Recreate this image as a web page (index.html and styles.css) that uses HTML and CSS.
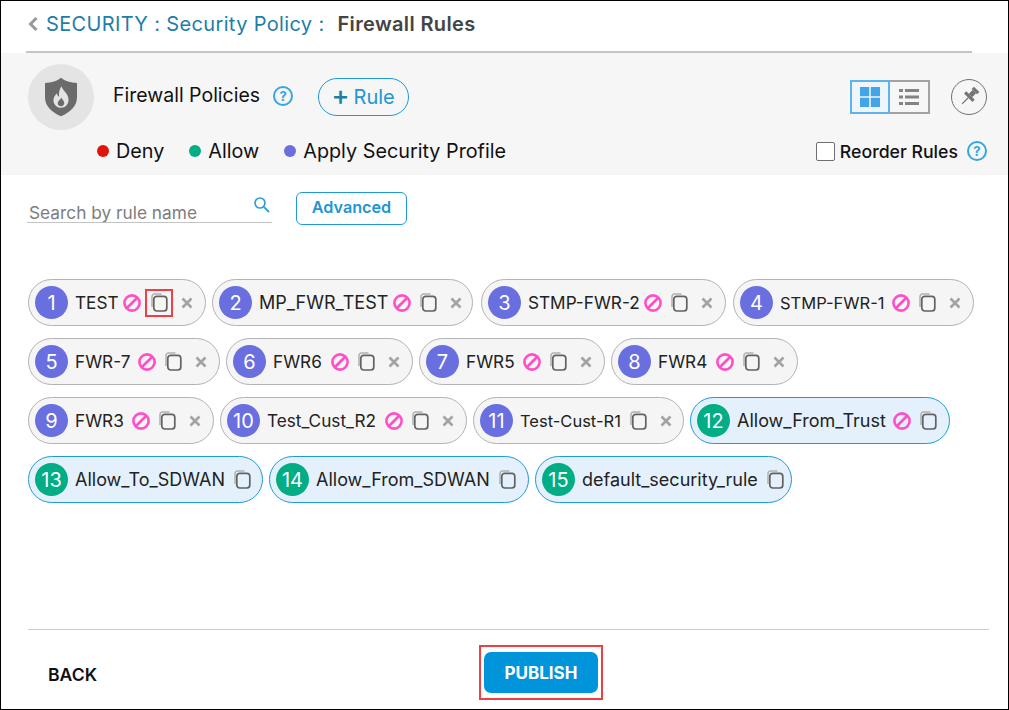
FILE: index.html
```html
<!DOCTYPE html>
<html lang="en">

<head>
    <meta charset="UTF-8">
    <title>Firewall Rules</title>
    <link rel="stylesheet" href="styles.css">
</head>

<body>
    <svg class="defs" width="0" height="0">
        <symbol id="ban" viewBox="0 0 18 18">
            <circle cx="9" cy="9" r="7.6" fill="none" stroke="#ff4fc8" stroke-width="2.6" />
            <path d="M4 14 14 4" stroke="#ff4fc8" stroke-width="2.6" />
        </symbol>
        <symbol id="copy" viewBox="0 0 17 19">
            <path d="M1 14V3.500A2.500 2.500 0 0 1 3.500 1H10.500" fill="none" stroke="#b0b0b0" stroke-width="1.500" />
            <rect x="2.800" y="3.300" width="13" height="14.700" rx="3" fill="none" stroke="#626262" stroke-width="1.700" />
        </symbol>
        <symbol id="close" viewBox="0 0 12 12">
            <path d="M1.500 1.500 10.500 10.500M10.500 1.500 1.500 10.500" stroke="#a3a3a3" stroke-width="2.600" />
        </symbol>
    </svg>

    <div class="page">
        <div class="crumbs">
            <svg class="back-arrow" width="10" height="14" viewBox="0 0 10 14">
                <path d="M8.500 1 2.500 7 8.500 13" fill="none" stroke="#999" stroke-width="3" />
            </svg>
            <span class="crumb-link">SECURITY : Security Policy :</span>
            <span class="crumb-current">Firewall Rules</span>
        </div>

        <div class="panel">
            <div class="panel-top">
                <div class="shield-badge">
                    <svg width="32" height="40" viewBox="0 0 34 41">
                        <path d="M17 0C21 3.500 27 5.500 34 5.500V21c0 9-7 15.500-17 20C7 36.500 0 30 0 21V5.500C7 5.500 13 3.500 17 0Z" fill="#6b6b6b" />
                        <path d="M17.500 9c1 4.500 7.500 7.500 7.500 14.500 0 5-3.500 8.500-8 8.500s-8-3.500-8-8c0-3.500 2-5.500 3.500-7.500.5 2 1.200 3 2.500 3.800C14.300 16 15.500 12 17.500 9Z" fill="#e4e4e4" />
                        <path d="M17.300 21c.5 2 3.200 3.200 3.200 6 0 2-1.500 3.400-3.500 3.400s-3.500-1.400-3.500-3.300c0-2.600 3-3.600 3.800-6.100Z" fill="#6b6b6b" />
                    </svg>
                </div>
                <span class="panel-title">Firewall Policies</span>
                <span class="help title-help">?</span>
                <button class="add-rule"><span class="plus">+</span>Rule</button>
                <div class="panel-tools">
                    <div class="view-toggle">
                        <span class="view-btn view-btn-on">
                            <svg width="20" height="20" viewBox="0 0 20 20">
                                <path d="M0 0h9.200v9.200H0zM10.800 0H20v9.200h-9.200zM0 10.800h9.200V20H0zM10.800 10.800H20V20h-9.200z" fill="#42a5ea" />
                            </svg>
                        </span>
                        <span class="view-btn">
                            <svg width="20" height="18" viewBox="0 0 20 18">
                                <path d="M0 1h4v3H0zM6 1h14v3H6zM0 7.500h4v3H0zM6 7.500h14v3H6zM0 14h4v3H0zM6 14h14v3H6z" fill="#848484" />
                            </svg>
                        </span>
                    </div>
                    <span class="pin">
                        <svg width="26" height="26" viewBox="0 0 24 24">
                            <g transform="rotate(45 12 12)" fill="#757575">
                                <rect x="8.500" y="2" width="7" height="3" />
                                <rect x="9.800" y="5" width="4.400" height="5" />
                                <rect x="6.500" y="10" width="11" height="3" />
                                <rect x="11.400" y="13" width="1.200" height="8" />
                            </g>
                        </svg>
                    </span>
                </div>
            </div>
            <div class="panel-bottom">
                <div class="legend">
                    <span class="legend-item"><i class="dot dot-deny"></i>Deny</span>
                    <span class="legend-item"><i class="dot dot-allow"></i>Allow</span>
                    <span class="legend-item"><i class="dot dot-profile"></i>Apply Security Profile</span>
                </div>
                <label class="reorder">
                    <span class="check"></span>
                    Reorder Rules
                    <span class="help reorder-help">?</span>
                </label>
            </div>
        </div>

        <div class="filters">
            <div class="search">
                <span class="search-text">Search by rule name</span>
                <svg class="search-icon" width="18" height="18" viewBox="0 0 18 18">
                    <circle cx="7" cy="7" r="5" fill="none" stroke="#2f9fdc" stroke-width="1.700" />
                    <path d="M10.800 10.800 16 16" stroke="#2f9fdc" stroke-width="1.900" />
                </svg>
            </div>
            <button class="advanced">Advanced</button>
        </div>

        <div class="rules">
            <div class="rule-row">
                <div class="chip chip-1"><span class="num">1</span><span class="name">TEST</span><svg class="ic-ban"><use href="#ban" /></svg><span class="copy-mark"><svg class="ic-copy"><use href="#copy" /></svg></span><svg class="ic-close"><use href="#close" /></svg></div>
                <div class="chip chip-2"><span class="num">2</span><span class="name name-wide">MP_FWR_TEST</span><svg class="ic-ban"><use href="#ban" /></svg><svg class="ic-copy"><use href="#copy" /></svg><svg class="ic-close"><use href="#close" /></svg></div>
                <div class="chip chip-3"><span class="num">3</span><span class="name">STMP-FWR-2</span><svg class="ic-ban"><use href="#ban" /></svg><svg class="ic-copy"><use href="#copy" /></svg><svg class="ic-close"><use href="#close" /></svg></div>
                <div class="chip chip-4"><span class="num">4</span><span class="name name-narrow">STMP-FWR-1</span><svg class="ic-ban"><use href="#ban" /></svg><svg class="ic-copy"><use href="#copy" /></svg><svg class="ic-close"><use href="#close" /></svg></div>
            </div>
            <div class="rule-row">
                <div class="chip chip-5"><span class="num">5</span><span class="name">FWR-7</span><svg class="ic-ban"><use href="#ban" /></svg><svg class="ic-copy"><use href="#copy" /></svg><svg class="ic-close"><use href="#close" /></svg></div>
                <div class="chip chip-6"><span class="num">6</span><span class="name">FWR6</span><svg class="ic-ban"><use href="#ban" /></svg><svg class="ic-copy"><use href="#copy" /></svg><svg class="ic-close"><use href="#close" /></svg></div>
                <div class="chip chip-7"><span class="num">7</span><span class="name">FWR5</span><svg class="ic-ban"><use href="#ban" /></svg><svg class="ic-copy"><use href="#copy" /></svg><svg class="ic-close"><use href="#close" /></svg></div>
                <div class="chip chip-8"><span class="num">8</span><span class="name">FWR4</span><svg class="ic-ban"><use href="#ban" /></svg><svg class="ic-copy"><use href="#copy" /></svg><svg class="ic-close"><use href="#close" /></svg></div>
            </div>
            <div class="rule-row">
                <div class="chip chip-9"><span class="num">9</span><span class="name">FWR3</span><svg class="ic-ban"><use href="#ban" /></svg><svg class="ic-copy"><use href="#copy" /></svg><svg class="ic-close"><use href="#close" /></svg></div>
                <div class="chip chip-10"><span class="num">10</span><span class="name">Test_Cust_R2</span><svg class="ic-ban"><use href="#ban" /></svg><svg class="ic-copy"><use href="#copy" /></svg><svg class="ic-close"><use href="#close" /></svg></div>
                <div class="chip chip-11"><span class="num">11</span><span class="name name-narrow">Test-Cust-R1</span><svg class="ic-copy"><use href="#copy" /></svg><svg class="ic-close"><use href="#close" /></svg></div>
                <div class="chip chip-12 chip-allow"><span class="num">12</span><span class="name">Allow_From_Trust</span><svg class="ic-ban"><use href="#ban" /></svg><svg class="ic-copy"><use href="#copy" /></svg></div>
            </div>
            <div class="rule-row">
                <div class="chip chip-13 chip-allow"><span class="num">13</span><span class="name">Allow_To_SDWAN</span><svg class="ic-copy"><use href="#copy" /></svg></div>
                <div class="chip chip-14 chip-allow"><span class="num">14</span><span class="name">Allow_From_SDWAN</span><svg class="ic-copy"><use href="#copy" /></svg></div>
                <div class="chip chip-15 chip-allow"><span class="num">15</span><span class="name">default_security_rule</span><svg class="ic-copy"><use href="#copy" /></svg></div>
            </div>
        </div>

        <div class="footer">
            <span class="back-link">BACK</span>
            <div class="publish-mark"><button class="publish">PUBLISH</button></div>
        </div>
    </div>
</body>

</html>
```

FILE: styles.css
```css
* {
    box-sizing: border-box;
}

html,
body {
    margin: 0;
    padding: 0;
    height: 100%;
}

body {
    font-family: 'Inter', 'Noto Sans', sans-serif;
    background: #fff;
    color: #1c1c1c;
}

button {
    font-family: inherit;
    background: none;
    padding: 0;
    cursor: pointer;
}

.defs {
    position: absolute;
}

.page {
    width: 1009px;
    height: 710px;
    border: 1px solid #000;
    display: flex;
    flex-direction: column;
}

.crumbs {
    height: 52px;
    margin: 0 36px 0 25px;
    padding: 0 0 4px 2px;
    display: flex;
    align-items: center;
    border-bottom: 2px solid #c4c4c4;
    font-size: 20px;
    letter-spacing: 0.35px;
}

.back-arrow {
    margin-right: 8px;
}

.crumb-link {
    color: #1d7ea8;
    margin-right: 13px;
}

.crumb-current {
    color: #444;
    font-weight: 600;
}

.panel {
    height: 122px;
    background: #f6f6f6;
    padding: 11px 21px 0 27px;
}

.panel-top {
    display: flex;
    align-items: flex-start;
}

.shield-badge {
    width: 66px;
    height: 66px;
    border-radius: 50%;
    background: #e4e4e4;
    display: flex;
    align-items: center;
    justify-content: center;
    flex-shrink: 0;
}

.panel-title {
    font-size: 19.500px;
    color: #111;
    margin: 19px 0 0 19px;
}

.help {
    width: 20px;
    height: 20px;
    border: 2px solid #35a6e3;
    border-radius: 50%;
    color: #35a6e3;
    font-size: 13px;
    font-weight: 700;
    display: flex;
    align-items: center;
    justify-content: center;
    flex-shrink: 0;
}

.title-help {
    margin: 22px 0 0 13px;
}

.add-rule {
    width: 91px;
    height: 38px;
    margin: 14px 0 0 25px;
    padding-right: 1px;
    border: 1px solid #1d9ad9;
    border-radius: 19px;
    color: #2196d3;
    font-size: 20px;
    display: flex;
    align-items: center;
    justify-content: center;
    gap: 4px;
}

.plus {
    font-size: 27px;
    font-weight: 500;
    line-height: 1;
    color: #1d7ea8;
    margin-top: -3px;
}

.panel-tools {
    margin-left: auto;
    display: flex;
    align-items: center;
    gap: 21px;
    margin-top: 15px;
}

.view-toggle {
    display: flex;
}

.view-btn {
    width: 40px;
    height: 34px;
    border: 2px solid #a2a2a2;
    display: flex;
    align-items: center;
    justify-content: center;
}

.view-btn + .view-btn {
    border-left: 0;
}

.view-btn-on {
    border-color: #5cb3ee;
    background: #eef6fc;
}

.pin {
    width: 36px;
    height: 36px;
    border: 1.500px solid #6f6f6f;
    border-radius: 50%;
    display: flex;
    align-items: center;
    justify-content: center;
}

.panel-bottom {
    display: flex;
    justify-content: space-between;
    align-items: center;
    margin-top: 9px;
}

.legend {
    margin-left: 69px;
    display: flex;
    gap: 25px;
    font-size: 19.800px;
    color: #111;
}

.legend-item {
    display: flex;
    align-items: center;
}

.dot {
    width: 12px;
    height: 12px;
    border-radius: 50%;
    margin-right: 7px;
}

.dot-deny {
    background: #e01408;
}

.dot-allow {
    background: #00ad85;
}

.dot-profile {
    background: #6a6fe0;
}

.reorder {
    display: flex;
    align-items: center;
    font-size: 17.700px;
    font-weight: 500;
    color: #111;
}

.check {
    width: 19px;
    height: 19px;
    border: 1.500px solid #6f6f6f;
    border-radius: 2px;
    background: #fff;
    margin-right: 5px;
}

.reorder-help {
    margin-left: 9px;
}

.filters {
    display: flex;
    align-items: flex-start;
    padding: 17px 0 0 26px;
    height: 104px;
}

.search {
    width: 245px;
    height: 31px;
    border-bottom: 1px solid #c4c4c4;
    display: flex;
    justify-content: space-between;
    align-items: flex-end;
    padding-left: 2px;
    font-size: 17.300px;
    color: #7d7d7d;
}

.search-text {
    margin-bottom: -1px;
}

.search-icon {
    margin: 0 1px 8px 0;
}

.advanced {
    width: 111px;
    height: 33px;
    margin-left: 24px;
    padding-bottom: 3px;
    border: 1px solid #1d9ad9;
    border-radius: 6px;
    color: #1d96d6;
    font-size: 16.200px;
    font-weight: 600;
}

.rules {
    padding-left: 27px;
    display: flex;
    flex-direction: column;
    gap: 12px;
    height: 350px;
}

.rule-row {
    display: flex;
    gap: 6px;
}

.chip {
    height: 47px;
    border: 1px solid #b3b3b3;
    border-radius: 24px;
    background: #f5f5f5;
    display: flex;
    align-items: center;
    padding: 0 12px 0 6px;
    flex-shrink: 0;
}

.chip-allow {
    border-color: #1e9bd7;
    background: #e4f1fd;
}

.num {
    width: 33px;
    height: 33px;
    border-radius: 50%;
    background: #6a6fe0;
    color: #fff;
    font-size: 20px;
    display: flex;
    align-items: center;
    justify-content: center;
    flex-shrink: 0;
    margin-right: 7px;
}

.chip-allow .num {
    background: #00ad85;
}

.name {
    flex: 1;
    font-size: 17.200px;
    color: #222;
    white-space: nowrap;
}

.name-wide,
.chip-allow .name {
    font-size: 18px;
}

.name-narrow {
    font-size: 16.500px;
}

.ic-ban {
    width: 18px;
    height: 18px;
    flex-shrink: 0;
}

.ic-copy {
    width: 17px;
    height: 19px;
    margin-left: 9px;
    flex-shrink: 0;
}

.ic-close {
    width: 12px;
    height: 12px;
    margin-left: 13px;
    flex-shrink: 0;
}

.copy-mark {
    width: 28px;
    height: 28px;
    margin-left: 4px;
    border: 2px solid #ee3f43;
    display: flex;
    align-items: center;
    justify-content: center;
}

.copy-mark .ic-copy {
    margin-left: 0;
}

.copy-mark + .ic-close {
    margin-left: 8px;
}

.chip-1 { width: 178px; }
.chip-2 { width: 261px; padding-right: 10px; }
.chip-3 { width: 245px; margin-left: 2px; }
.chip-4 { width: 241px; margin-left: 1px; }
.chip-5 { width: 192px; }
.chip-6 { width: 187px; }
.chip-7 { width: 186px; }
.chip-8 { width: 187px; }
.chip-9 { width: 186px; }
.chip-10 { width: 247px; }
.chip-11 { width: 211px; }
.chip-12 { width: 260px; }
.chip-13 { width: 235px; }
.chip-14 { width: 260px; }
.chip-15 { width: 257px; }

.footer {
    margin: 0 19px 0 27px;
    flex: 1;
    border-top: 1px solid #cfcfcf;
    display: flex;
    align-items: flex-start;
    padding: 15px 0 0 20px;
}

.back-link {
    font-size: 17.600px;
    font-weight: 600;
    color: #111;
    width: 431px;
    margin-top: 19px;
}

.publish-mark {
    width: 124px;
    height: 55px;
    border: 2px solid #ee3f43;
    display: flex;
    align-items: center;
    justify-content: center;
}

.publish {
    width: 114px;
    height: 41px;
    border: 0;
    border-radius: 7px;
    background: #0095da;
    color: #fff;
    font-size: 17px;
    font-weight: 700;
}
```
